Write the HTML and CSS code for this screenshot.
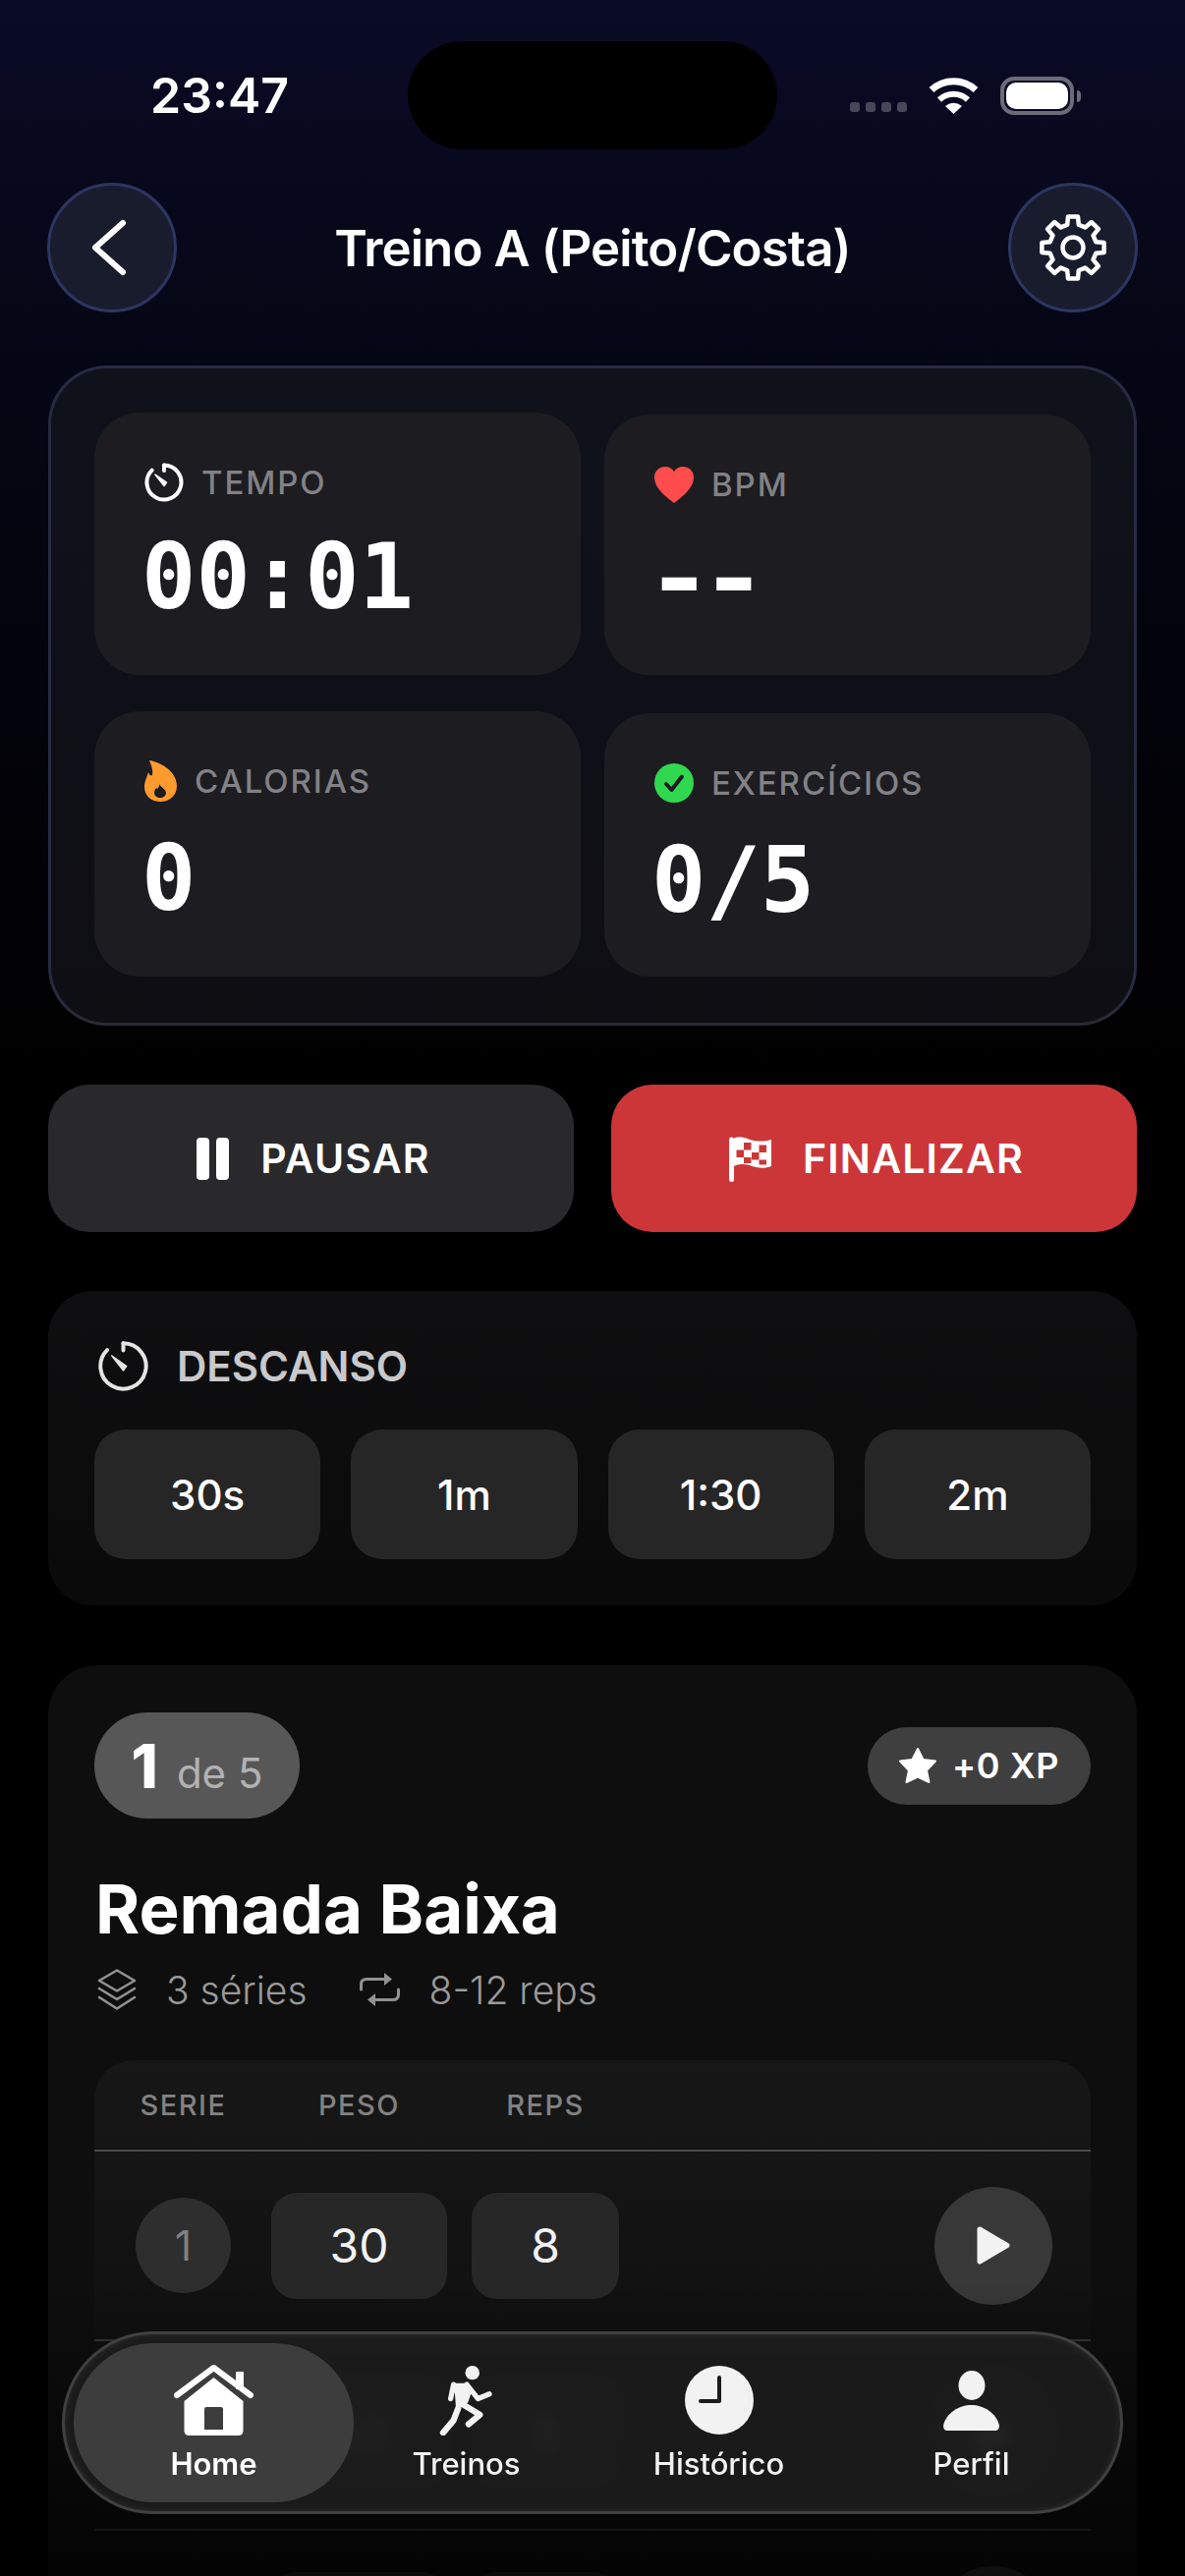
FILE: index.html
```html
<!DOCTYPE html>
<html lang="pt-BR">
<head>
    <meta charset="UTF-8">
    <meta name="viewport" content="width=device-width, initial-scale=1.0">
    <title>Treino A (Peito/Costa)</title>
    <link rel="stylesheet" href="styles.css">
</head>
<body>
    <div class="screen">
        <div class="status-bar">
            <div class="status-time">23:47</div>
            <div class="island"></div>
            <div class="status-icons">
                <div class="signal"><span></span><span></span><span></span><span></span></div>
                <svg class="wifi" width="51" height="37" viewBox="0 0 51 37" fill="none" stroke="#fff">
                    <path d="M3 12.5A33 33 0 0 1 48 12.5" stroke-width="7"/>
                    <path d="M11 22.5A21 21 0 0 1 40 22.5" stroke-width="6"/>
                    <path d="M17 29Q25.5 22.5 34 29L25.5 37Z" fill="#fff" stroke="none"/>
                </svg>
                <div class="battery"><div class="battery-fill"></div></div>
            </div>
        </div>

        <header class="top-bar">
            <button class="round-button">
                <svg class="back-icon" width="40" height="62" viewBox="0 0 40 62" fill="none" stroke="#fff" stroke-width="6" stroke-linecap="round" stroke-linejoin="round">
                    <polyline points="34,6 6,31 34,56"/>
                </svg>
            </button>
            <h1 class="top-title">Treino A (Peito/Costa)</h1>
            <button class="round-button">
                <svg width="72" height="72" viewBox="-2 -2 72 72" fill="none" stroke="#fff" stroke-width="4.5" stroke-linejoin="round">
                    <polygon points="28.19,10.71 29,2.4 39,2.4 39.81,10.71 46.36,13.43 52.81,8.11 59.89,15.19 54.57,21.64 57.29,28.19 65.6,29 65.6,39 57.29,39.81 54.57,46.36 59.89,52.81 52.81,59.89 46.36,54.57 39.81,57.29 39,65.6 29,65.6 28.19,57.29 21.64,54.57 15.19,59.89 8.11,52.81 13.43,46.36 10.71,39.81 2.4,39 2.4,29 10.71,28.19 13.43,21.64 8.11,15.19 15.19,8.11 21.64,13.43"/>
                    <circle cx="34" cy="34" r="10.5"/>
                </svg>
            </button>
        </header>

        <main class="content">
            <section class="stats-card">
                <div class="stat">
                    <div class="stat-label">
                        <svg width="40" height="40" viewBox="0 0 40 40" fill="none" stroke="#fff" stroke-width="4" stroke-linecap="round">
                            <path d="M20 2.5A17.5 17.5 0 1 1 7.6 7.6"/>
                            <path d="M20 2.5V8"/>
                            <polygon points="11,12 22.5,20 20,23.5" fill="#fff" stroke-width="1.5" stroke-linejoin="round"/>
                        </svg>
                        TEMPO
                    </div>
                    <div class="stat-value">00:01</div>
                </div>
                <div class="stat stat-right">
                    <div class="stat-label">
                        <svg width="40" height="37" viewBox="0 0 40 37">
                            <path d="M20 37C14 32 0 23 0 11C0 4 5 0 11 0C15 0 18.5 2 20 5C21.5 2 25 0 29 0C35 0 40 4 40 11C40 23 26 32 20 37Z" fill="#ff4c4c"/>
                        </svg>
                        BPM
                    </div>
                    <div class="stat-value stat-dashes">--</div>
                </div>
                <div class="stat stat-low">
                    <div class="stat-label">
                        <svg width="33" height="42" viewBox="0 0 33 42">
                            <path fill-rule="evenodd" fill="#ff9a2e" d="M5 0C14 1 33 10 33 26C33 36 25 42 16.5 42C7 42 0 36 0 27C0 21 3 16 4 12C5 15 7 16 8 15C9 10 7 5 5 0ZM15 24C16 27 22 29 22 33C22 36 19 38 16 38C13 38 10 36 10 33C10 31 11 29 12 28C13 29 14 29 14 28C15 27 15 25 15 24Z"/>
                        </svg>
                        CALORIAS
                    </div>
                    <div class="stat-value">0</div>
                </div>
                <div class="stat stat-right stat-low">
                    <div class="stat-label">
                        <svg width="40" height="40" viewBox="0 0 40 40">
                            <circle cx="20" cy="20" r="20" fill="#30d84f"/>
                            <polyline points="12,21 17.5,27 28,13.5" fill="none" stroke="#1c1c21" stroke-width="4" stroke-linecap="round" stroke-linejoin="round"/>
                        </svg>
                        EXERCÍCIOS
                    </div>
                    <div class="stat-value">0/5</div>
                </div>
            </section>

            <section class="actions">
                <button class="action-button action-pause">
                    <span class="pause-icon"><span></span><span></span></span>
                    PAUSAR
                </button>
                <button class="action-button action-finish">
                    <svg width="43" height="47" viewBox="0 0 43 47">
                        <path d="M3 4C8 0 14 1 21 4C28 6 35 6 43 4V31C36 34 28 33 21 30C14 28 8 29 5 31Z" fill="#fff"/>
                        <line x1="2.5" y1="4" x2="2.5" y2="44.5" stroke="#fff" stroke-width="5" stroke-linecap="round"/>
                        <g fill="#cc3639">
                            <rect x="15" y="7" width="7.5" height="7.5"/>
                            <rect x="30.5" y="9.5" width="7.5" height="7.5"/>
                            <rect x="7.5" y="14.5" width="7.5" height="7.5"/>
                            <rect x="23" y="17" width="7.5" height="7.5"/>
                            <rect x="15" y="22" width="7.5" height="6"/>
                            <rect x="30.5" y="24.5" width="7.5" height="5"/>
                        </g>
                    </svg>
                    FINALIZAR
                </button>
            </section>

            <section class="rest-card">
                <div class="rest-title">
                    <svg width="53" height="53" viewBox="0 0 40 40" fill="none" stroke="#e4e4e4" stroke-width="3" stroke-linecap="round">
                        <path d="M20 2.5A17.5 17.5 0 1 1 7.6 7.6"/>
                        <path d="M20 2.5V8"/>
                        <polygon points="11,12 22.5,20 20,23.5" fill="#e4e4e4" stroke-width="1" stroke-linejoin="round"/>
                    </svg>
                    DESCANSO
                </div>
                <div class="rest-options">
                    <button class="rest-option">30s</button>
                    <button class="rest-option">1m</button>
                    <button class="rest-option">1:30</button>
                    <button class="rest-option">2m</button>
                </div>
            </section>

            <section class="exercise-card">
                <div class="exercise-top">
                    <div class="step-pill"><strong>1</strong> de 5</div>
                    <div class="xp-pill">
                        <svg width="40" height="38" viewBox="0 0 40 38">
                            <polygon points="20,2 25.5,13 38,14.5 29,24 31.5,36 20,30.5 8.5,36 11,24 2,14.5 14.5,13" fill="#fff" stroke="#fff" stroke-width="2" stroke-linejoin="round"/>
                        </svg>
                        +0 XP
                    </div>
                </div>
                <h2 class="exercise-name">Remada Baixa</h2>
                <div class="exercise-meta">
                    <svg width="40" height="42" viewBox="0 0 40 42" fill="none" stroke="#929292" stroke-width="2.6" stroke-linejoin="round" stroke-linecap="round">
                        <polygon points="20,1.5 38,12 20,22.5 2,12"/>
                        <polyline points="2,20 20,31 38,20"/>
                        <polyline points="2,29 20,40.5 38,29"/>
                    </svg>
                    <span class="meta-text">3 séries</span>
                    <svg class="meta-repeat" width="41" height="34" viewBox="0 0 41 34" fill="none" stroke="#929292" stroke-width="3" stroke-linecap="round">
                        <path d="M1.5 17V12Q1.5 6.5 7 6.5H26"/>
                        <polygon points="25,0 33,6.5 25,13" fill="#929292" stroke="none"/>
                        <path d="M39.5 17V22Q39.5 27.5 34 27.5H15"/>
                        <polygon points="16,21 8,27.5 16,34" fill="#929292" stroke="none"/>
                    </svg>
                    <span class="meta-text">8-12 reps</span>
                </div>

                <div class="sets-table">
                    <div class="sets-head">
                        <span class="col-num">SERIE</span>
                        <span class="col-weight">PESO</span>
                        <span class="col-reps">REPS</span>
                    </div>
                    <div class="set-row">
                        <span class="col-num set-number">1</span>
                        <span class="col-weight set-input">30</span>
                        <span class="col-reps set-input">8</span>
                        <button class="set-play">
                            <svg width="36" height="41" viewBox="0 0 36 41"><polygon points="4,4 32,20.5 4,37" fill="#f2f2f2" stroke="#f2f2f2" stroke-width="5" stroke-linejoin="round"/></svg>
                        </button>
                    </div>
                    <!-- row 2 sits behind the tab bar, only its blur shows -->
                    <div class="set-row">
                        <span class="col-num set-number"></span>
                        <span class="col-weight set-input">30</span>
                        <span class="col-reps set-input">8</span>
                        <button class="set-play">
                            <svg width="36" height="41" viewBox="0 0 36 41"><polygon points="4,4 32,20.5 4,37" fill="#f2f2f2" stroke="#f2f2f2" stroke-width="5" stroke-linejoin="round"/></svg>
                        </button>
                    </div>
                    <!-- row 3 runs off the bottom of the screen -->
                    <div class="set-row">
                        <span class="col-num set-number"></span>
                        <span class="col-weight set-input"></span>
                        <span class="col-reps set-input"></span>
                        <button class="set-play"></button>
                    </div>
                </div>
            </section>
        </main>

        <div class="bottom-fade"></div>

        <nav class="tab-bar">
            <a class="tab tab-active">
                <svg width="81" height="72" viewBox="0 0 81 72">
                    <rect x="63" y="7" width="8" height="18" rx="1" fill="#fff"/>
                    <polyline points="3,31 40.5,3 78,31" fill="none" stroke="#fff" stroke-width="6" stroke-linecap="round" stroke-linejoin="round"/>
                    <path fill-rule="evenodd" fill="#fff" d="M40.5 13L10.5 37V67Q10.5 72 15.5 72H65.5Q70.5 72 70.5 67V37ZM31 45Q31 43 33 43H48Q50 43 50 45V66H31Z"/>
                </svg>
                <span>Home</span>
            </a>
            <a class="tab">
                <svg width="57" height="72" viewBox="0 -1 57 75" fill="none" stroke="#f2f2f2" stroke-width="6.5" stroke-linecap="round" stroke-linejoin="round">
                    <circle cx="35" cy="7.5" r="7.5" fill="#f2f2f2" stroke="none"/>
                    <polygon points="15,20 29,20 33,27 29,38 19,44 18,30" fill="#f2f2f2" stroke-width="3"/>
                    <polyline points="15,20 12,35" stroke-width="5.5"/>
                    <polyline points="29,20 41,35 53,30" stroke-width="5.5"/>
                    <polyline points="20,45 15,58 4,71"/>
                    <polyline points="25,41 43,52 31,62"/>
                </svg>
                <span>Treinos</span>
            </a>
            <a class="tab">
                <svg width="70" height="72" viewBox="0 0 70 72">
                    <ellipse cx="35" cy="36" rx="35" ry="35" fill="#f2f2f2"/>
                    <polyline points="35,13 35,37 16,37" fill="none" stroke="#1c1c1c" stroke-width="4" stroke-linecap="round" stroke-linejoin="round"/>
                </svg>
                <span>Histórico</span>
            </a>
            <a class="tab">
                <svg width="57" height="72" viewBox="0 0 57 72">
                    <g transform="translate(0 6)">
                        <ellipse cx="29" cy="15" rx="13.5" ry="15" fill="#f2f2f2"/>
                        <path d="M4 61Q0 61 0 56C3 43 16 35 28.5 35C41 35 54 43 57 56Q57 61 53 61Z" fill="#f2f2f2"/>
                    </g>
                </svg>
                <span>Perfil</span>
            </a>
        </nav>
    </div>
</body>
</html>
```

FILE: styles.css
```css
/* Base */
html, body {
    margin: 0;
    padding: 0;
    background-color: #000;
}

button {
    border: none;
    padding: 0;
    font: inherit;
    color: inherit;
}

.screen {
    position: relative;
    width: 1206px;
    height: 2622px;
    overflow: hidden;
    font-family: Inter, "Liberation Sans", sans-serif;
    color: #fff;
    background: linear-gradient(#0a0b26 0, #060716 320px, #020208 800px, #000 1100px);
}

/* Status bar */
.status-bar {
    display: grid;
    grid-template-columns: 415px 376px 1fr;
    align-items: center;
    padding-top: 42px;
}

.status-time {
    padding-left: 153px;
    font-size: 50px;
    font-weight: 600;
}

.island {
    height: 110px;
    border-radius: 55px;
    background-color: #000;
}

.status-icons {
    display: flex;
    align-items: center;
    gap: 22px;
    padding-left: 74px;
}

.signal {
    display: flex;
    gap: 6px;
    margin-top: 23px;
}

.signal span {
    width: 10px;
    height: 10px;
    border-radius: 3px;
    background-color: #46485a;
}

.battery {
    position: relative;
    width: 67px;
    height: 31px;
    padding: 0;
    border: 4px solid #6b6c78;
    border-radius: 14px;
}

.battery::after {
    content: "";
    position: absolute;
    top: 10px;
    left: 74px;
    width: 4px;
    height: 12px;
    border-radius: 0 4px 4px 0;
    background-color: #6b6c78;
}

.battery-fill {
    height: 27px;
    margin: 2px;
    border-radius: 10px;
    background-color: #fff;
}

/* Header */
.top-bar {
    display: flex;
    justify-content: space-between;
    align-items: center;
    margin-top: 34px;
    padding: 0 48px;
}

.round-button {
    display: flex;
    justify-content: center;
    align-items: center;
    box-sizing: border-box;
    width: 132px;
    height: 132px;
    border: 3px solid #2b3760;
    border-radius: 50%;
    background-color: #181c2d;
}

.back-icon {
    margin-right: 6px;
}

.top-title {
    margin: 0;
    font-size: 51px;
    font-weight: 600;
    letter-spacing: -0.9px;
}

/* Cards */
.content {
    padding: 54px 49px 0;
}

.stats-card {
    display: grid;
    grid-template-columns: 495px 495px;
    grid-template-rows: 267px 270px;
    column-gap: 24px;
    row-gap: 37px;
    box-sizing: border-box;
    height: 672px;
    padding: 45px 44px;
    border: 3px solid #272b42;
    border-bottom-color: #2a2b34;
    border-radius: 60px;
    background: linear-gradient(#10121b, #0e0e13);
}

.stat {
    padding: 49px 0 0 51px;
    border-radius: 46px;
    background-color: #1c1c21;
}

.stat-right {
    margin-top: 2px;
}

.stat-label {
    display: flex;
    align-items: center;
    gap: 18px;
    height: 44px;
    font-size: 33px;
    font-weight: 500;
    letter-spacing: 1.9px;
    color: #828286;
}

.stat-value {
    margin: 25px 0 0 -3px;
    font-family: "DejaVu Sans Mono", "Liberation Mono", monospace;
    font-size: 92px;
    font-weight: 700;
    line-height: 100px;
    color: #fff;
}

.stat-low .stat-value {
    margin-top: 28px;
}

/* hyphens of the mono font are shorter than the ones in the design */
.stat-dashes {
    margin-left: -9px;
    letter-spacing: -10.5px;
    transform: scaleX(1.237);
    transform-origin: left center;
}

/* Action buttons */
.actions {
    display: flex;
    gap: 38px;
    margin-top: 60px;
}

.action-button {
    display: flex;
    flex: 1;
    justify-content: center;
    align-items: center;
    gap: 32px;
    height: 150px;
    padding-left: 5px;
    border-radius: 42px;
    font-size: 41px;
    font-weight: 600;
    letter-spacing: 1.2px;
}

.action-pause {
    background-color: #29292c;
}

.action-finish {
    background-color: #cc3639;
}

.pause-icon {
    display: flex;
    gap: 7px;
}

.pause-icon span {
    width: 13px;
    height: 43px;
    border-radius: 4px;
    background-color: #fff;
}

/* Rest timer */
.rest-card {
    box-sizing: border-box;
    height: 320px;
    margin-top: 60px;
    padding: 50px 47px 0;
    border-radius: 46px;
    background: linear-gradient(#0f0f11, #0a0a0a);
}

.rest-title {
    display: flex;
    align-items: center;
    gap: 28px;
    height: 53px;
    padding-left: 3px;
    font-size: 42px;
    font-weight: 600;
    color: #c9c9cb;
}

.rest-options {
    display: flex;
    gap: 31px;
    margin-top: 38px;
}

.rest-option {
    flex: 1;
    height: 132px;
    border-radius: 32px;
    background-color: #262626;
    font-size: 42px;
    font-weight: 500;
}

/* Exercise */
.exercise-card {
    margin-top: 61px;
    padding: 48px 47px 0;
    height: 1100px;
    border-radius: 50px;
    background-color: #0e0e0e;
}

.exercise-top {
    display: flex;
    justify-content: space-between;
    align-items: center;
}

.step-pill {
    display: flex;
    align-items: baseline;
    justify-content: center;
    gap: 19px;
    box-sizing: border-box;
    width: 209px;
    height: 108px;
    padding-top: 24px;
    border-radius: 54px;
    background-color: #575757;
    font-size: 42px;
    color: #b2b2b2;
}

.step-pill strong {
    font-size: 62px;
    font-weight: 800;
    line-height: 1;
    color: #fff;
}

.xp-pill {
    display: flex;
    align-items: center;
    gap: 15px;
    box-sizing: border-box;
    width: 227px;
    height: 79px;
    padding-left: 31px;
    border-radius: 40px;
    background-color: #3f3f3f;
    font-size: 36px;
    font-weight: 600;
    letter-spacing: 0.6px;
}

.exercise-name {
    margin: 50px 0 0 1px;
    font-size: 69px;
    font-weight: 700;
    line-height: 84px;
}

.exercise-meta {
    display: flex;
    align-items: center;
    gap: 30px;
    height: 44px;
    margin: 18px 0 0 3px;
}

.meta-text {
    font-size: 39px;
    font-weight: 300;
    color: #9a9a9a;
}

.meta-repeat {
    margin-left: 23px;
}

/* Sets table */
.sets-table {
    margin-top: 50px;
    border-radius: 40px 40px 0 0;
    background: linear-gradient(#171717, #101010 300px, #0e0e0e);
}

.sets-head,
.set-row {
    display: flex;
    align-items: center;
    gap: 25px;
    padding: 0 39px 0 42px;
}

.sets-head {
    height: 91px;
    border-bottom: 2px solid #4a4a4a;
    font-size: 29px;
    font-weight: 500;
    letter-spacing: 1.5px;
    color: #828282;
}

.set-row {
    height: 191px;
    border-bottom: 2px solid #363636;
}

.col-num,
.col-weight,
.col-reps {
    text-align: center;
}

.col-num {
    width: 97px;
    margin-right: 16px;
}

.col-weight {
    width: 179px;
}

.col-reps {
    width: 150px;
}

.set-number {
    height: 97px;
    border-radius: 50%;
    background-color: #2e2e2e;
    font-size: 42px;
    line-height: 97px;
    color: #808080;
}

.set-input {
    height: 108px;
    border-radius: 26px;
    background-color: #272727;
    font-size: 48px;
    line-height: 108px;
    color: #f2f2f2;
}

.set-play {
    display: flex;
    justify-content: center;
    align-items: center;
    width: 120px;
    height: 120px;
    margin-left: auto;
    border-radius: 50%;
    background-color: #383838;
}

/* Fade under the tab bar */
.bottom-fade {
    position: absolute;
    left: 0;
    right: 0;
    bottom: 0;
    height: 300px;
    background: linear-gradient(rgba(0, 0, 0, 0), rgba(0, 0, 0, 0.75));
}

/* Tab bar */
.tab-bar {
    position: absolute;
    left: 63px;
    top: 2373px;
    display: flex;
    box-sizing: border-box;
    width: 1080px;
    height: 186px;
    padding: 9px 23px;
    border: 3px solid rgba(255, 255, 255, 0.17);
    border-radius: 93px;
    background-color: rgba(28, 28, 28, 0.93);
    backdrop-filter: blur(7px);
    box-shadow: inset 0 0 8px rgba(255, 255, 255, 0.08);
}

.tab {
    position: relative;
    display: flex;
    flex: 1;
    flex-direction: column;
    align-items: center;
    padding-top: 22px;
    font-size: 31px;
    font-weight: 500;
    color: #f2f2f2;
}

.tab svg {
    position: relative;
}

.tab span {
    position: relative;
    margin-top: 10px;
}

.tab-active {
    font-weight: 600;
    color: #fff;
}

.tab-active::before {
    content: "";
    position: absolute;
    top: 0;
    bottom: 0;
    left: -14px;
    right: -14px;
    border-radius: 81px;
    background-color: #3d3d3d;
}
```
